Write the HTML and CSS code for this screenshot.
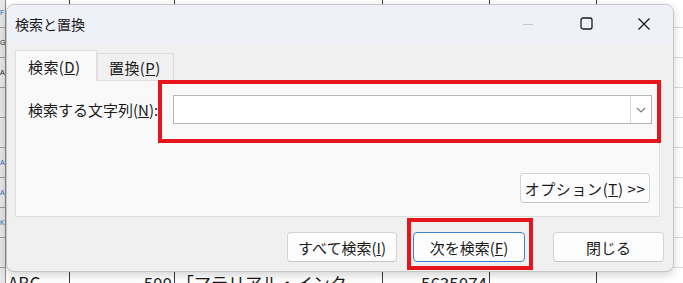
FILE: index.html
```html
<!DOCTYPE html>
<html>
<head>
  <title>検索と置換</title>
  <link rel="stylesheet" href="styles.css">
</head>
<body>
  <table class="sheet">
    <tbody id="sheet-body">
      <!-- filas generadas por el script -->
    </tbody>
  </table>

  <div class="dialog">
    <div class="titlebar">
      <span class="title">検索と置換</span>
      <span class="ctl">
        <svg width="12" height="12" viewBox="0 0 12 12"><path d="M1 6.5h10" stroke="#c4c4c4" stroke-width="1"/></svg>
      </span>
      <span class="ctl">
        <svg width="13" height="13" viewBox="0 0 13 13"><rect x="1" y="1" width="11" height="11" rx="2" fill="none" stroke="#1a1a1a" stroke-width="1.3"/></svg>
      </span>
      <span class="ctl">
        <svg width="14" height="14" viewBox="0 0 14 14"><path d="M1.5 1.5l11 11M12.5 1.5l-11 11" stroke="#1a1a1a" stroke-width="1.3"/></svg>
      </span>
    </div>

    <div class="main">
      <div class="tabs">
        <div class="tab active">検索(<u>D</u>)</div>
        <div class="tab">置換(<u>P</u>)</div>
      </div>
      <div class="panel">
        <div class="find-row">
          <span class="label">検索する文字列(<u>N</u>):</span>
          <div class="combo">
            <div class="combo-input"></div>
            <div class="combo-btn">
              <svg width="10" height="6" viewBox="0 0 10 6"><path d="M1 1l4 4 4-4" fill="none" stroke="#7a7a7a" stroke-width="1.1"/></svg>
            </div>
          </div>
        </div>
        <div class="options-row">
          <button class="btn btn-options">オプション(<u>T</u>)&nbsp;&gt;&gt;</button>
        </div>
      </div>
      <div class="footer">
        <button class="btn btn-all">すべて検索(<u>I</u>)</button>
        <button class="btn btn-next">次を検索(<u>F</u>)</button>
        <button class="btn btn-close">閉じる</button>
      </div>
    </div>
  </div>

  <div class="mark mark-find"></div>
  <div class="mark mark-next"></div>

  <script>
    function generarHoja() {
      var cuerpo = document.getElementById("sheet-body");
      var tira = ["F", "G", "A", "", "", "A", "A", "K", "", ""];
      var tiraAzul = [true, false, false, false, false, true, true, true, false, false];
      var ultima = ["ABC", "500", "「マテリアル・インク", "5635074", "", ""];

      for (var i = 0; i < 10; i++) {
        var fila = document.createElement("tr");
        if (i === 9) {
          fila.className = "last";
        }
        var celda = document.createElement("td");
        celda.className = "strip" + (tiraAzul[i] ? " blue" : "");
        celda.textContent = tira[i];
        fila.appendChild(celda);

        for (var j = 0; j < 6; j++) {
          var td = document.createElement("td");
          td.className = "c" + j;
          if (i === 9) {
            td.textContent = ultima[j];
          }
          fila.appendChild(td);
        }
        cuerpo.appendChild(fila);
      }
    }

    generarHoja();
  </script>
</body>
</html>
```

FILE: styles.css
```css
body {
  margin: 0;
  width: 683px;
  height: 283px;
  overflow: hidden;
  position: relative;
  background-color: #ffffff;
  font-family: "Noto Sans CJK JP", sans-serif;
}

/* hoja de fondo */
.sheet {
  border-collapse: collapse;
  table-layout: fixed;
  width: 683px;
  margin-top: -2px;
  font-size: 17px;
  color: #1a1a1a;
}

.sheet td {
  height: 29px;
  padding: 0 2px;
  border-bottom: 1px solid #dcdcdc;
  white-space: nowrap;
  overflow: hidden;
  line-height: 29px;
}

.sheet tr.last td {
  height: 14px;
  line-height: 30px;
  vertical-align: top;
  border-bottom: none;
}

.sheet td.strip {
  width: 5px;
  padding: 0;
  background-color: #e6e6e6;
  border-right: 1px solid #8a8a8a;
  border-bottom: 1px solid #9a9a9a;
  font-family: "Liberation Sans", sans-serif;
  font-size: 7px;
}

.sheet td.blue {
  color: #2f6db5;
}

.sheet td.c0 { width: 59px; border-right: 1px solid #3a3a3a; }
.sheet td.c1 { width: 100px; border-right: 1px solid #3a3a3a; text-align: right; }
.sheet td.c2 { width: 203px; border-right: 1px solid #3a3a3a; }
.sheet td.c3 { width: 102px; border-right: 1px solid #3a3a3a; text-align: right; }
.sheet td.c4 { width: 102px; border-right: 1px solid #3a3a3a; }
.sheet td.c5 { border-right: none; }

/* ventana de dialogo */
.dialog {
  position: absolute;
  left: 6px;
  top: 4px;
  width: 668px;
  height: 268px;
  box-sizing: border-box;
  border: 1px solid #c6c6c6;
  border-radius: 8px;
  background-color: #f0f0f0;
  box-shadow: 0 3px 10px rgba(0, 0, 0, 0.18);
  overflow: hidden;
  color: #1a1a1a;
}

.titlebar {
  height: 37px;
  display: flex;
  align-items: center;
  padding-left: 8px;
  background-color: #eef1f7;
  font-size: 14px;
}

.title {
  flex: 1;
}

.ctl {
  width: 58px;
  height: 37px;
  display: flex;
  align-items: center;
  justify-content: center;
}

.main {
  padding: 8px 0 0 8px;
}

.tabs {
  display: flex;
  align-items: flex-end;
  height: 30px;
}

.tab {
  box-sizing: border-box;
  height: 27px;
  width: 77px;
  padding-left: 11px;
  display: flex;
  align-items: center;
  border: 1px solid #dedede;
  border-bottom: none;
  background-color: #f0f0f0;
  font-size: 15px;
  letter-spacing: 0.4px;
}

.tab.active {
  width: 82px;
  height: 31px;
  margin-bottom: -1px;
  padding-left: 12px;
  background-color: #f9f9f9;
  position: relative;
  z-index: 1;
}

.panel {
  box-sizing: border-box;
  height: 137px;
  margin-right: 13px;
  border: 1px solid #dedede;
  background-color: #f9f9f9;
  padding: 14px 7px 13px 12px;
  display: flex;
  flex-direction: column;
}

.find-row {
  display: flex;
  align-items: center;
}

.label {
  width: 145px;
  font-size: 15px;
}

.combo {
  flex: 1;
  height: 29px;
  box-sizing: border-box;
  border: 1px solid #b4b4b4;
  background-color: #ffffff;
  display: flex;
}

.combo-input {
  flex: 1;
}

.combo-btn {
  width: 20px;
  border-left: 1px solid #dadada;
  display: flex;
  align-items: center;
  justify-content: center;
}

.options-row {
  margin-top: auto;
  display: flex;
  justify-content: flex-end;
  padding-right: 2px;
}

.footer {
  display: flex;
  justify-content: flex-end;
  padding: 15px 9px 0 0;
}

.btn {
  box-sizing: border-box;
  height: 30px;
  border: 1px solid #d3d3d3;
  border-bottom-color: #c4c4c4;
  border-radius: 4px;
  background-color: #fdfdfd;
  font-family: "Noto Sans CJK JP", sans-serif;
  font-size: 15px;
  color: #1a1a1a;
  padding: 0;
  display: flex;
  align-items: center;
  justify-content: center;
}

.btn-options { width: 130px; letter-spacing: 0.6px; }
.btn-all { width: 110px; }
.btn-next { width: 112px; margin-left: 16px; border-color: #3f82cc; }
.btn-close { width: 111px; margin-left: 28px; }

/* recuadros rojos */
.mark {
  position: absolute;
  box-sizing: border-box;
  border: 4px solid #e8141b;
}

.mark-find {
  left: 158px;
  top: 80px;
  width: 503px;
  height: 63px;
}

.mark-next {
  left: 407px;
  top: 218px;
  width: 126px;
  height: 52px;
}
```
